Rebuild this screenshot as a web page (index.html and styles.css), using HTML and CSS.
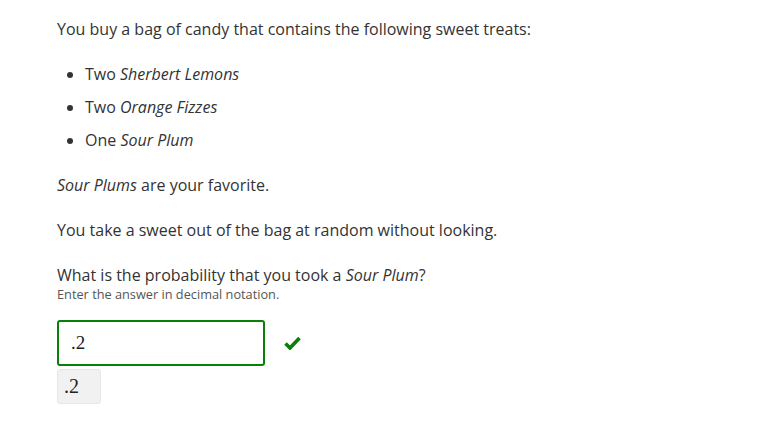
FILE: index.html
```html
<!DOCTYPE html>
<html>
<head>
<meta charset="utf-8">
<link rel="stylesheet" href="styles.css">
</head>
<body>
<div class="question">
  <p class="para">You buy a bag of candy that contains the following sweet treats:</p>
  <ul class="list">
    <li>Two <em>Sherbert Lemons</em></li>
    <li>Two <em>Orange Fizzes</em></li>
    <li>One <em>Sour Plum</em></li>
  </ul>
  <p class="para"><em>Sour Plums</em> are your favorite.</p>
  <p class="para">You take a sweet out of the bag at random without looking.</p>
  <p class="para last">What is the probability that you took a <em>Sour Plum</em>?</p>
  <div class="hint">Enter the answer in decimal notation.</div>
  <div class="answer-row">
    <div class="input">.2</div>
    <svg class="check" width="17" height="14" viewBox="0 0 17 14"><path d="M1.5 7.5 L6 12 L15.5 2" fill="none" stroke="#0a7f0a" stroke-width="3.6"/></svg>
  </div>
  <div class="preview">.2</div>
</div>
</body>
</html>
```
FILE: styles.css
```css
body {
  margin: 0;
  background: #fff;
  font-family: "Open Sans", sans-serif;
  color: #333;
}
.question {
  padding: 18px 0 0 57px;
}
.para {
  margin: 0 0 23px;
  font-size: 16px;
  line-height: 22px;
}
.para.last {
  margin-bottom: 0;
}
.list {
  margin: 0 0 23px;
  padding-left: 28px;
  font-size: 16px;
  line-height: 22px;
}
.list li {
  margin-bottom: 11px;
}
.list li:last-child {
  margin-bottom: 0;
}
.hint {
  font-size: 12.75px;
  line-height: 16px;
  color: #555;
}
.answer-row {
  display: flex;
  align-items: center;
  margin-top: 18px;
}
.input {
  box-sizing: border-box;
  width: 208px;
  height: 46px;
  border: 2px solid #078007;
  border-radius: 3px;
  padding-left: 12px;
  display: flex;
  align-items: center;
  font-family: "Liberation Serif", serif;
  font-size: 19px;
  color: #222;
}
.check {
  margin-left: 19px;
}
.preview {
  box-sizing: border-box;
  margin-top: 3px;
  width: 44px;
  height: 35px;
  background: #f1f1f1;
  border: 1px solid #e6e6e6;
  border-radius: 3px;
  padding-left: 6px;
  display: flex;
  align-items: center;
  font-family: "Liberation Serif", serif;
  font-size: 20px;
  color: #222;
}
```
